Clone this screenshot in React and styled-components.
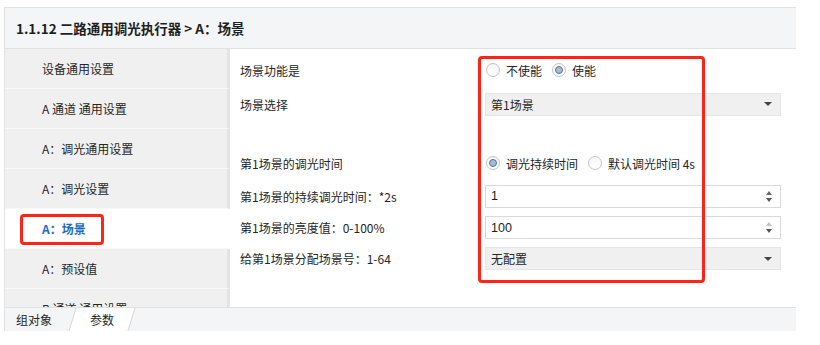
import React from "react"
import styled, { createGlobalStyle } from "styled-components"

const GlobalStyle = createGlobalStyle`
  body {
    margin: 0;
    background: #ffffff;
    font-family: "Noto Sans CJK SC", "Noto Sans", sans-serif;
    color: #262626;
  }
`

const Page = styled.div`
  width: 820px;
  height: 345px;
  padding: 7px 0 0 4px;
  box-sizing: border-box;
`

const Frame = styled.div`
  width: 791px;
  border-left: 1px solid #e2e2e2;
  border-top: 1px solid #e2e2e2;
  display: flex;
  flex-direction: column;
`

const Header = styled.div`
  height: 40px;
  display: flex;
  align-items: center;
  padding-left: 11px;
  background: #f4f5f7;
  border-bottom: 1px solid #e2e2e2;
  font-size: 13.5px;
  font-weight: bold;
  color: #1e1e1e;
`

const Body = styled.div`
  display: flex;
  height: 258px;
`

const Sidebar = styled.div`
  width: 225px;
  flex-shrink: 0;
  overflow: hidden;
  background: #f0f0f0;
`

const NavItem = styled.div`
  position: relative;
  height: 39px;
  border-bottom: 1px solid #f9f9f9;
  border-right: 3px solid ${(p) => (p.$active ? "#ffffff" : "#e4e4e4")};
  background: ${(p) => (p.$active ? "#ffffff" : "#f0f0f0")};
  display: flex;
  align-items: center;
  padding-left: 37px;
  font-size: 12px;
  color: ${(p) => (p.$active ? "#1b6ec2" : "#262626")};
  font-weight: ${(p) => (p.$active ? "bold" : "normal")};
`

const Highlight = styled.div`
  position: absolute;
  left: ${(p) => p.$left}px;
  top: ${(p) => p.$top}px;
  width: ${(p) => p.$width}px;
  height: ${(p) => p.$height}px;
  border: 3px solid #ff2418;
  border-radius: 4px;
  box-sizing: border-box;
  pointer-events: none;
`

const Content = styled.div`
  position: relative;
  flex: 1;
  background: #ffffff;
  padding: 4px 0 0 10px;
`

const Grid = styled.div`
  display: grid;
  grid-template-columns: 245px 296px;
`

const Label = styled.div`
  height: ${(p) => p.$h}px;
  display: flex;
  align-items: center;
  font-size: 12px;
  color: #262626;
`

const Control = styled.div`
  height: ${(p) => p.$h}px;
  display: flex;
  align-items: center;
`

const RadioGroup = styled.div`
  display: flex;
  align-items: center;
  gap: 10px;
  margin-left: 1px;
`

const RadioOption = styled.label`
  display: flex;
  align-items: center;
  gap: 6px;
  font-size: 12px;
  color: #262626;
`

const RadioCircle = styled.span`
  position: relative;
  width: 14px;
  height: 14px;
  border-radius: 50%;
  border: 1px solid #c4c4c4;
  background: linear-gradient(#f6f6f6, #ffffff);
  box-sizing: border-box;

  &::after {
    content: "";
    display: ${(p) => (p.$checked ? "block" : "none")};
    position: absolute;
    left: 2px;
    top: 2px;
    width: 8px;
    height: 8px;
    border-radius: 50%;
    box-sizing: border-box;
    background: #a7bbd3;
    border: 1px solid #56739a;
  }
`

const Select = styled.div`
  width: 100%;
  height: 23px;
  box-sizing: border-box;
  display: flex;
  align-items: center;
  justify-content: space-between;
  padding: 0 8px 0 5px;
  background: #f0f0f0;
  border: 1px solid #e6e6e6;
  font-size: 12px;
  color: #262626;
`

const Caret = styled.span`
  width: 0;
  height: 0;
  border-left: 4px solid transparent;
  border-right: 4px solid transparent;
  border-top: 4px solid #444444;
`

const Spin = styled.div`
  width: 100%;
  height: 23px;
  box-sizing: border-box;
  display: flex;
  align-items: center;
  justify-content: space-between;
  padding: 0 8px 0 5px;
  background: #ffffff;
  border: 1px solid #d9d9d9;
  font-size: 12.5px;
  font-family: "Liberation Sans", "Noto Sans", sans-serif;
  color: #1e1e1e;
`

const Arrows = styled.div`
  display: flex;
  flex-direction: column;
  gap: 3px;
`

const Up = styled.span`
  width: 0;
  height: 0;
  border-left: 3.5px solid transparent;
  border-right: 3.5px solid transparent;
  border-bottom: 4px solid ${(p) => (p.$disabled ? "#c2c2c2" : "#666666")};
`

const Down = styled.span`
  width: 0;
  height: 0;
  border-left: 3.5px solid transparent;
  border-right: 3.5px solid transparent;
  border-top: 4px solid #555555;
`

const TabBar = styled.div`
  height: 23px;
  display: flex;
  align-items: center;
  background: #f4f5f7;
  border-top: 1px solid #e0e0e0;
  padding-left: 11px;
  font-size: 12px;
  color: #262626;
`

const Tab = styled.div`
  position: relative;
  height: 100%;
  display: flex;
  align-items: center;
  justify-content: center;
  width: ${(p) => (p.$active ? "60px" : "auto")};
  margin-left: ${(p) => (p.$active ? "20px" : "0")};

  &::before {
    content: "";
    display: ${(p) => (p.$active ? "block" : "none")};
    position: absolute;
    inset: 0;
    background: #ffffff;
    border-left: 1px solid #d4d4d4;
    border-right: 1px solid #d4d4d4;
    transform: skewX(-17deg);
  }

  span {
    position: relative;
  }
`

const navItems = [
  "设备通用设置",
  "A 通道 通用设置",
  "A：调光通用设置",
  "A：调光设置",
  "A：场景",
  "A：预设值",
  "B 通道 通用设置",
]

const Radio = ({ checked, children }) => (
  <RadioOption>
    <RadioCircle $checked={checked} />
    {children}
  </RadioOption>
)

const SpinBox = ({ value, upDisabled }) => (
  <Spin>
    {value}
    <Arrows>
      <Up $disabled={upDisabled} />
      <Down />
    </Arrows>
  </Spin>
)

export default function App() {
  return (
    <Page>
      <GlobalStyle />
      <Frame>
        <Header>1.1.12 二路通用调光执行器 &gt; A：场景</Header>
        <Body>
          <Sidebar>
            {navItems.map((item) => (
              <NavItem key={item} $active={item === "A：场景"}>
                {item}
                {item === "A：场景" && (
                  <Highlight $left={15} $top={5} $width={84} $height={31} />
                )}
              </NavItem>
            ))}
          </Sidebar>
          <Content>
            <Grid>
              <Label $h={34}>场景功能是</Label>
              <Control $h={34}>
                <RadioGroup>
                  <Radio>不使能</Radio>
                  <Radio checked>使能</Radio>
                </RadioGroup>
              </Control>

              <Label $h={34}>场景选择</Label>
              <Control $h={34}>
                <Select>
                  第1场景
                  <Caret />
                </Select>
              </Control>

              <Label $h={25} />
              <Control $h={25} />

              <Label $h={34}>第1场景的调光时间</Label>
              <Control $h={34}>
                <RadioGroup>
                  <Radio checked>调光持续时间</Radio>
                  <Radio>默认调光时间 4s</Radio>
                </RadioGroup>
              </Control>

              <Label $h={32}>第1场景的持续调光时间：*2s</Label>
              <Control $h={32}>
                <SpinBox value="1" />
              </Control>

              <Label $h={31}>第1场景的亮度值：0-100%</Label>
              <Control $h={31}>
                <SpinBox value="100" upDisabled />
              </Control>

              <Label $h={31}>给第1场景分配场景号：1-64</Label>
              <Control $h={31}>
                <Select>
                  无配置
                  <Caret />
                </Select>
              </Control>
            </Grid>
            <Highlight $left={248} $top={7} $width={227} $height={227} />
          </Content>
        </Body>
        <TabBar>
          <Tab>
            <span>组对象</span>
          </Tab>
          <Tab $active>
            <span>参数</span>
          </Tab>
        </TabBar>
      </Frame>
    </Page>
  )
}
